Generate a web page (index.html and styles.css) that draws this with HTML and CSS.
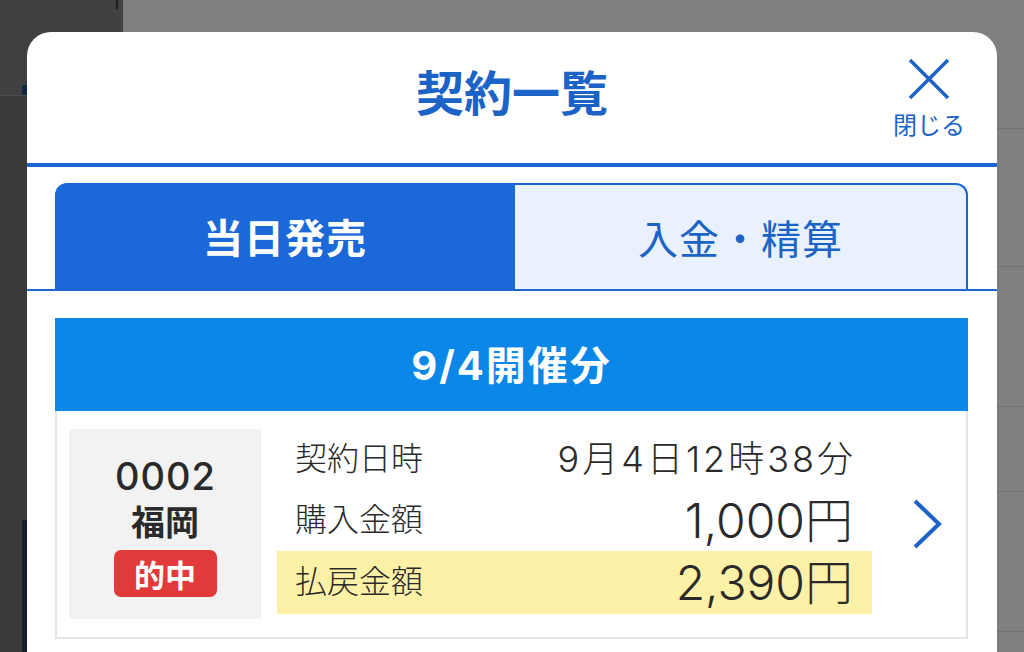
FILE: index.html
```html
<!DOCTYPE html>
<html lang="ja">
<head>
  <meta charset="UTF-8" />
  <meta name="viewport" content="width=device-width, initial-scale=1" />
  <title>契約一覧</title>
  <link rel="stylesheet" href="styles.css">
</head>
<body>
  <div class="fondo">
    <div class="lateral">
      <div class="lateral-arriba"><span class="marca"></span></div>
      <div class="lateral-abajo"><span class="barra"></span></div>
    </div>
    <div class="principal">
      <div class="fila" style="height: 129px;"></div>
      <div class="fila" style="height: 138px;"></div>
      <div class="fila" style="height: 140px;"></div>
      <div class="fila" style="height: 85px;"></div>
      <div class="fila" style="height: 140px;"></div>
    </div>
  </div>

  <div class="modal">
    <div class="cabecera">
      <h2>契約一覧</h2>
      <div class="cerrar">
        <svg width="44" height="42" viewBox="0 0 44 42">
          <path d="M3 2 L41 40 M41 2 L3 40" stroke="#1b63c6" stroke-width="3.5" fill="none"/>
        </svg>
        <span>閉じる</span>
      </div>
    </div>

    <div class="pestanas">
      <div class="pestana activa">当日発売</div>
      <div class="pestana">入金・精算</div>
    </div>

    <div class="contenido">
      <div class="titulo-dia">9/4開催分</div>

      <div class="tarjeta">
        <div class="carrera">
          <div class="numero">0002</div>
          <div class="lugar">福岡</div>
          <div class="etiqueta">的中</div>
        </div>

        <div class="datos">
          <div class="dato">
            <span>契約日時</span>
            <span class="valor">9月4日12時38分</span>
          </div>
          <div class="dato">
            <span>購入金額</span>
            <span class="valor grande">1,000円</span>
          </div>
          <div class="dato resaltado">
            <span>払戻金額</span>
            <span class="valor grande">2,390円</span>
          </div>
        </div>

        <div class="flecha">
          <svg width="30" height="50" viewBox="0 0 30 50">
            <path d="M3 2 L27 25 L3 48" stroke="#1b63c6" stroke-width="4" fill="none"/>
          </svg>
        </div>
      </div>
    </div>
  </div>
</body>
</html>
```

FILE: styles.css
```css
* {
  box-sizing: border-box;
}

body {
  margin: 0;
  width: 1024px;
  height: 652px;
  overflow: hidden;
  font-family: Inter, "Noto Sans CJK JP", sans-serif;
  color: #2a2a2a;
  background: #808080;
  position: relative;
}

/* fondo detrás del modal */
.fondo {
  display: flex;
  height: 100%;
}

.lateral {
  width: 123px;
  display: flex;
  flex-direction: column;
}

.lateral-arriba {
  height: 96px;
  background: #414141;
  border-bottom: 1px solid #4c4c4c;
  position: relative;
}

.lateral-arriba::after {
  content: "";
  position: absolute;
  left: 116px;
  top: 0;
  width: 2px;
  height: 9px;
  background: #1e1e1e;
}

.marca {
  position: absolute;
  left: 22px;
  bottom: 0;
  width: 6px;
  height: 10px;
  background: #14254a;
}

.lateral-abajo {
  flex: 1;
  background: #3a3a3a;
  position: relative;
}

.barra {
  position: absolute;
  left: 22px;
  top: 424px;
  width: 5px;
  height: 132px;
  background: #151d2c;
}

.principal {
  flex: 1;
  background: #7f7f7f;
}

.fila {
  border-bottom: 1px solid #707070;
}

/* modal */
.modal {
  position: absolute;
  left: 27px;
  top: 32px;
  width: 970px;
  height: 620px;
  overflow: hidden;
  background: white;
  border-radius: 24px 24px 0 0;
}

.cabecera {
  height: 135px;
  border-bottom: 4px solid #1b66d0;
  display: flex;
  align-items: center;
  justify-content: center;
  position: relative;
}

.cabecera h2 {
  margin: 0 0 8px;
  font-size: 48px;
  font-weight: 700;
  color: #1b63c6;
  line-height: 1.2;
}

.cerrar {
  position: absolute;
  right: 32px;
  top: 26px;
  display: flex;
  flex-direction: column;
  align-items: center;
  color: #1b63c6;
  font-size: 24px;
  line-height: 1;
}

.cerrar span {
  margin-top: 14px;
}

.pestanas {
  display: flex;
  padding: 16px 29px 0 28px;
  border-bottom: 2px solid #1b66d0;
}

.pestana {
  flex: 1;
  height: 106px;
  display: flex;
  align-items: center;
  justify-content: center;
  font-size: 40px;
  letter-spacing: 1px;
  color: #1b63c6;
  background: #e8f1fd;
  border: 2px solid #1b66d0;
  border-bottom: none;
  border-left: none;
  border-radius: 0 12px 0 0;
}

.pestana.activa {
  background: #1b69d8;
  color: white;
  font-weight: 700;
  border: none;
  border-radius: 12px 0 0 0;
  flex: 0 0 460px;
}

.contenido {
  padding: 27px 29px 0 28px;
}

.titulo-dia {
  height: 93px;
  background: #0b87e8;
  color: white;
  font-size: 40px;
  font-weight: 700;
  letter-spacing: 2px;
  display: flex;
  align-items: center;
  justify-content: center;
  padding-bottom: 4px;
}

.tarjeta {
  display: flex;
  align-items: center;
  height: 228px;
  border: 2px solid #e4e4e4;
  border-top: none;
  padding: 18px 0 18px 12px;
}

.carrera {
  width: 192px;
  height: 190px;
  background: #f2f2f2;
  display: flex;
  flex-direction: column;
  align-items: center;
  justify-content: center;
}

.numero {
  font-size: 38px;
  font-weight: 500;
  letter-spacing: 1px;
  margin-right: -1px;
  line-height: 48px;
}

.lugar {
  font-size: 34px;
  font-weight: 700;
  line-height: 46px;
}

.etiqueta {
  margin-top: 4px;
  width: 103px;
  height: 47px;
  background: #e23a3a;
  color: white;
  border-radius: 7px;
  font-size: 31px;
  font-weight: 700;
  display: flex;
  align-items: center;
  justify-content: center;
}

.datos {
  width: 595px;
  margin: 0 0 5px 16px;
  align-self: stretch;
  display: flex;
  flex-direction: column;
}

.dato {
  flex: 1;
  display: flex;
  align-items: center;
  justify-content: space-between;
  padding: 0 19px 0 18px;
  font-size: 32px;
  font-weight: 300;
  line-height: 1.2;
}

.dato.resaltado {
  flex: 0 0 63px;
  background: #fdf1a8;
}

.valor {
  font-size: 36px;
  letter-spacing: 3px;
  margin-right: -3px;
}

.valor.grande {
  font-size: 48px;
  letter-spacing: 0;
  margin-right: 0;
}

.flecha {
  flex: 1;
  display: flex;
  justify-content: center;
  padding-left: 16px;
}
```
